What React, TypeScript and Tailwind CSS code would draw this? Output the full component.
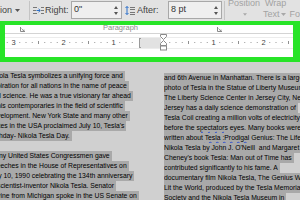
const leftA = [
  "Nikola Tesla symbolizes a unifying force and",
  "aspiration for all nations in the name of peace",
  "and science. He was a true visionary far ahead",
  "of his contemporaries in the field of scientific",
  "development. New York State and many other",
  "states in the USA proclaimed July 10, Tesla's",
  "birthday- Nikola Tesla Day.",
];

const leftB = [
  "Many United States Congressmen gave",
  "speeches in the House of Representatives on",
  "July 10, 1990 celebrating the 134th anniversary",
  "of scientist-inventor Nikola Tesla. Senator",
  "Levine from Michigan spoke in the US Senate on",
];

const squiggle = "underline decoration-wavy decoration-[#3050d0]";

const right: React.ReactNode[] = [
  "and 6th Avenue in Manhattan. There is a large",
  "photo of Tesla in the Statue of Liberty Museum.",
  "The Liberty Science Center in Jersey City, New",
  "Jersey has a daily science demonstration of",
  "Tesla Coil creating a million volts of electricity",
  <>
    before the <span className={squiggle}>spectators</span> eyes. Many books were
  </>,
  <>
    written about <span className={squiggle}>Tesla :Prodigal</span> Genius: The Life of
  </>,
  "Nikola Tesla by John J. O'Neill  and Margaret",
  "Cheney's book Tesla: Man out of Time has",
  "contributed significantly to his fame. A",
  "documentary film Nikola Tesla, The Genius Who",
  "Lit the World, produced by the Tesla Memorial",
  "Society and the Nikola Tesla Museum in",
];

function Line({ children }: { children: React.ReactNode }) {
  return (
    <div className="h-[10px] whitespace-pre leading-[10px]">
      <span className="inline-block bg-[#a9a9a9] pr-[2px]">{children}</span>
    </div>
  );
}

function Caret({ color = "#555" }: { color?: string }) {
  return (
    <svg width="5" height="3" viewBox="0 0 5 3">
      <path d="M0 0h5L2.5 3z" fill={color} />
    </svg>
  );
}

function Spinner() {
  return (
    <div className="mr-[3px] flex flex-col gap-[3px]">
      <svg width="4" height="3" viewBox="0 0 4 3">
        <path d="M0 3h4L2 0z" fill="#555" />
      </svg>
      <svg width="4" height="3" viewBox="0 0 4 3">
        <path d="M0 0h4L2 3z" fill="#555" />
      </svg>
    </div>
  );
}

function Field({ value, w }: { value: string; w: string }) {
  return (
    <div
      className={`${w} mt-[1px] flex h-[18px] items-center justify-between border border-[#a8a8a8] bg-[#efefef] pl-[2px] text-[9px] text-[#333]`}
    >
      <span>{value}</span>
      <Spinner />
    </div>
  );
}

function IndentRightIcon() {
  return (
    <svg width="11" height="9" viewBox="0 0 11 9">
      <g stroke="#777" strokeWidth="1">
        <path d="M0 1.5h4M0 4.5h3M0 7.5h4M8 1.5h3M8 4.5h3M8 7.5h3" />
      </g>
      <path d="M3.5 4.5h3.5M5.5 2.8l1.8 1.7-1.8 1.7" stroke="#2a6fc9" fill="none" strokeWidth="1" />
    </svg>
  );
}

function SpaceAfterIcon() {
  return (
    <svg width="10" height="9" viewBox="0 0 10 9">
      <path d="M2 0.5v8M0.5 2l1.5-1.5L3.5 2M0.5 7l1.5 1.5L3.5 7" stroke="#2a6fc9" fill="none" strokeWidth="1" />
      <path d="M5 1.5h5M5 3.5h5M5 6.5h5M5 8.5h5" stroke="#777" strokeWidth="1" />
    </svg>
  );
}

function Launcher() {
  return (
    <svg width="5" height="5" viewBox="0 0 5 5" className="shrink-0">
      <path d="M0.5 0v4.5H5" stroke="#8a8a8a" fill="none" strokeWidth="1" />
      <path d="M1.5 1.5l2.5 2.5M2.5 4H4V2.5" stroke="#8a8a8a" fill="none" strokeWidth="0.8" />
    </svg>
  );
}

function Ruler() {
  const zero = 158.5;
  const marks: React.ReactNode[] = [];
  for (let k = -25; k <= 20; k++) {
    const x = zero + k * 6.25;
    if (x < 1 || x > 287) continue;
    if (k >= -4 && k <= 0) continue;
    if (k % 8 === 0) {
      marks.push(
        <text key={k} x={x} y="12.3" fontSize="7.5" textAnchor="middle" fill="#444" fontFamily="Liberation Sans, sans-serif">
          {Math.abs(k / 8)}
        </text>,
      );
    } else if (k % 4 === 0) {
      marks.push(<path key={k} d={`M${x} 8v3`} stroke="#8f8f8f" strokeWidth="1" />);
    } else {
      marks.push(<rect key={k} x={x - 0.5} y="9" width="1" height="1" fill="#9a9a9a" />);
    }
  }
  return (
    <svg width="288" height="24" viewBox="0 0 288 24" className="block">
      <path d="M0 0.5h288" stroke="#d4d4d4" />
      <rect x="0" y="4" width="288" height="12" fill="#fff" />
      <path d="M0 4.5h288M0 15.5h288" stroke="#ececec" />
      <rect x="135" y="5" width="21" height="10" fill="#e2e2e2" />
      <path d="M134.5 5v10M134.5 5.5h1.5M134.5 14.5h1.5" stroke="#9a9a9a" fill="none" />
      {marks}
      <g stroke="#8a8a8a" fill="#fff" strokeWidth="1">
        <path d="M155.5 1.5h6v2l-3 3l-3-3z" />
        <path d="M158.5 7.5l3 3v2h-6v-2z" />
        <rect x="155.5" y="13" width="6" height="4" />
      </g>
    </svg>
  );
}

export default function App() {
  return (
    <div className="h-[200px] w-[300px] overflow-hidden bg-[#d0d0d0] font-['Liberation_Sans',sans-serif]">
      <div className="flex h-[21px] bg-[#e2e2e2] text-[9px] text-[#444]">
        <div className="flex w-[29px] shrink-0 items-center gap-[3px]">
          <span>ion</span>
          <Caret />
        </div>
        <div className="my-[1px] w-px shrink-0 bg-[#c4c4c4]" />
        <div className="flex w-[41px] shrink-0 items-center gap-[1px] pl-[3px]">
          <IndentRightIcon />
          <span>Right:</span>
        </div>
        <Field value={'0"'} w="w-[51px] shrink-0" />
        <div className="flex w-[46px] shrink-0 items-center gap-[2px] pl-[3px]">
          <SpaceAfterIcon />
          <span>After:</span>
        </div>
        <Field value="8 pt" w="w-[54px] shrink-0" />
        <div className="ml-[2px] my-[1px] w-px shrink-0 bg-[#c4c4c4]" />
        <div className="flex min-w-0 flex-1 flex-col whitespace-nowrap text-[#a2a2a2]">
          <div className="flex h-[7px] items-center pl-[3px] leading-[7px]">
            <span>Position</span>
            <span className="ml-[5px]">Wrap</span>
          </div>
          <div className="mt-[4px] flex h-[7px] items-center pl-[18px] leading-[7px]">
            <Caret color="#a8a8a8" />
            <span className="ml-[16px]">Text</span>
            <span className="ml-[2px]">
              <Caret color="#a8a8a8" />
            </span>
            <span className="ml-[3px]">Fo</span>
          </div>
        </div>
      </div>

      <div className="flex h-[41px] flex-col border-b-[5px] border-l-[5px] border-r-[7px] border-t-[4px] border-[#28e428] bg-white">
        <div className="flex h-[8px] items-start overflow-hidden text-[7.5px] text-[#8c8c8c]">
          <div className="ml-[15px] mt-[2px]">
            <Launcher />
          </div>
          <span className="ml-[78px] block leading-[5px]">Paragraph</span>
          <div className="ml-[79px] mt-[2px]">
            <Launcher />
          </div>
        </div>
        <Ruler />
      </div>

      <div className="flex h-[138px] overflow-hidden text-[6.8px] text-black">
        <div className="-ml-[10.5px] w-[174.5px] shrink-0 pt-[9px]">
          {leftA.map((t, i) => (
            <Line key={i}>{t}</Line>
          ))}
          <div className="mt-[10px]">
            {leftB.map((t, i) => (
              <Line key={i}>{t}</Line>
            ))}
          </div>
        </div>
        <div className="min-w-0 flex-1 overflow-hidden pt-[11px]">
          {right.map((t, i) => (
            <Line key={i}>{t}</Line>
          ))}
        </div>
      </div>
    </div>
  );
}
